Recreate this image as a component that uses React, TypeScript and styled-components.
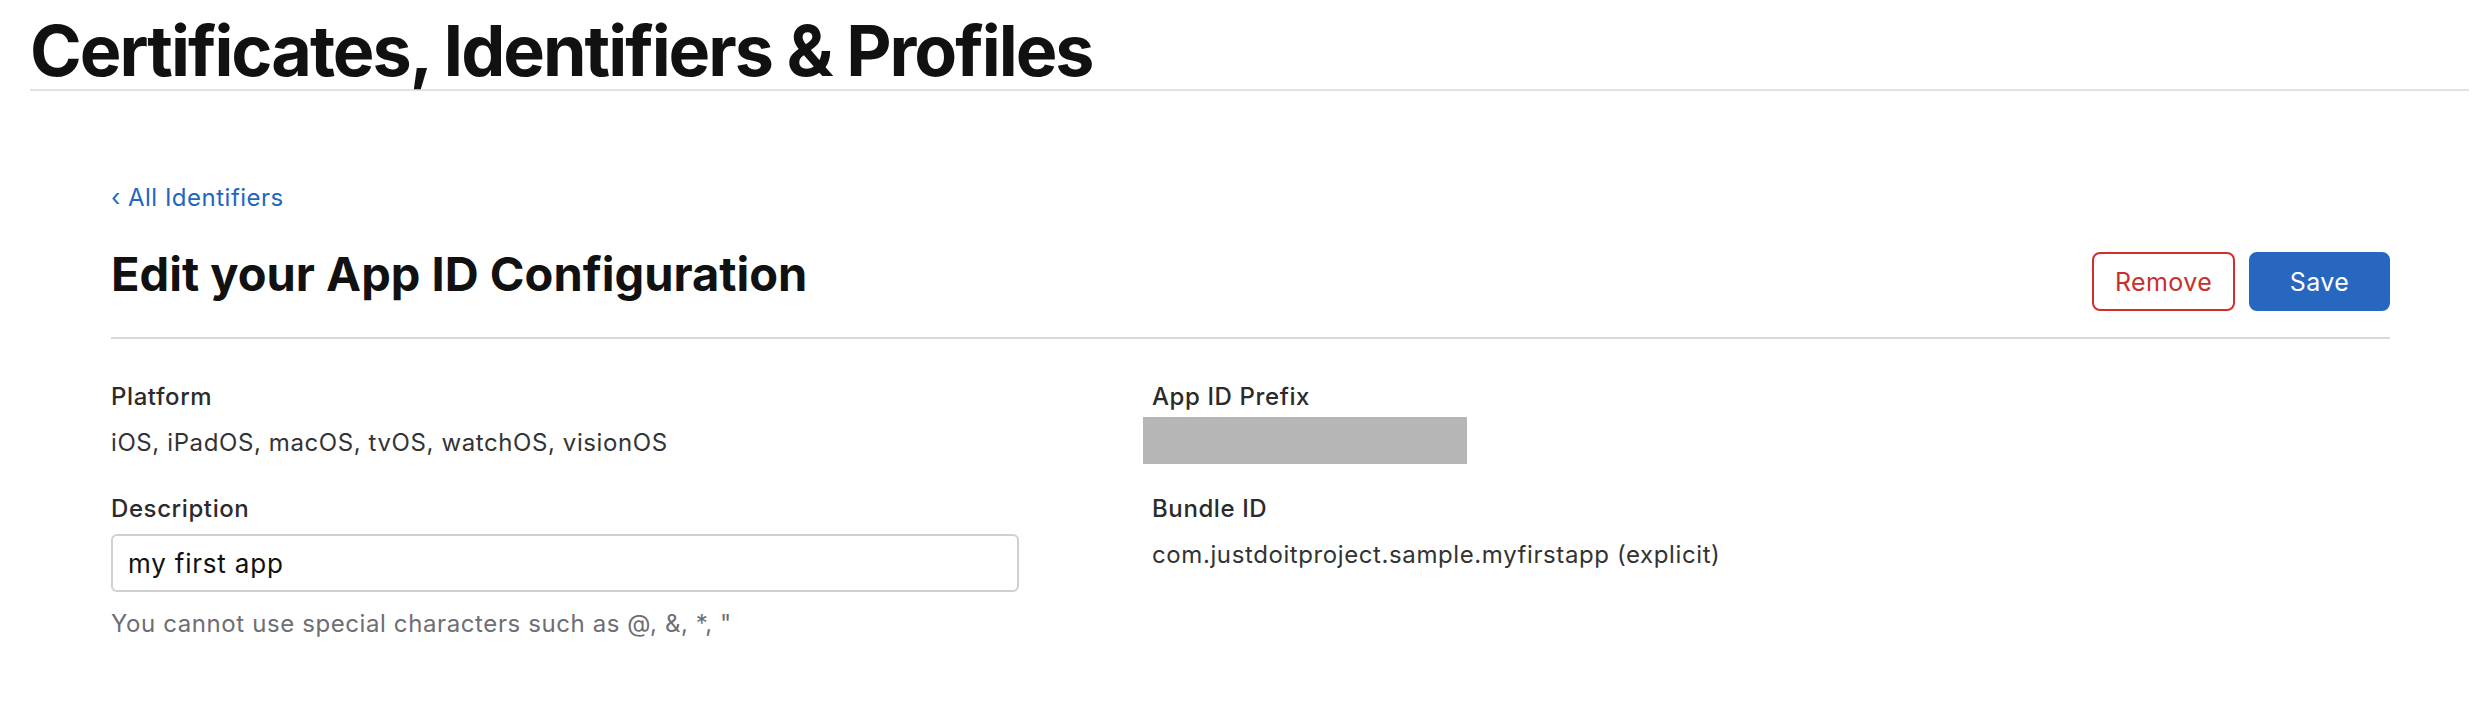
import React from 'react';
import styled, { createGlobalStyle } from 'styled-components';

const GlobalStyle = createGlobalStyle`
  html, body {
    margin: 0;
    padding: 0;
    background: #fff;
  }
  body {
    font-family: Inter, "Noto Sans", "Liberation Sans", sans-serif;
    color: #333;
  }
`;

const Header = styled.header`
  margin: 0 9px 0 30px;
  padding: 16px 0 3px;
  border-bottom: 2px solid #e1e1e1;
`;

const SiteTitle = styled.h1`
  margin: 0;
  font-size: 70px;
  line-height: 70px;
  font-weight: 700;
  letter-spacing: -2px;
  color: #111;
`;

const Main = styled.main`
  padding: 91px 88px 0 111px;
`;

const BackLink = styled.a`
  display: inline-block;
  font-size: 24px;
  line-height: 32px;
  letter-spacing: 0.5px;
  color: #2166c2;
  text-decoration: none;
  cursor: pointer;
`;

const TitleRow = styled.div`
  display: flex;
  justify-content: space-between;
  align-items: flex-start;
  margin-top: 32px;
  padding-bottom: 26px;
  border-bottom: 2px solid #d8d8d8;
`;

const PageTitle = styled.h2`
  margin: 0;
  font-size: 47px;
  line-height: 56px;
  font-weight: 700;
  letter-spacing: 0;
  color: #111;
`;

const Actions = styled.div`
  display: flex;
  gap: 14px;
  margin-top: 6px;
`;

const Button = styled.button<{ $variant: 'danger' | 'primary' }>`
  height: 59px;
  width: ${p => (p.$variant === 'danger' ? '143px' : '141px')};
  border-radius: 8px;
  font-family: inherit;
  font-size: 25px;
  letter-spacing: 0.4px;
  cursor: pointer;
  border: 2px solid ${p => (p.$variant === 'danger' ? '#d1302a' : '#2767c0')};
  background: ${p => (p.$variant === 'danger' ? '#fff' : '#2767c0')};
  color: ${p => (p.$variant === 'danger' ? '#c9302c' : '#fff')};
`;

const Fields = styled.div`
  display: grid;
  grid-template-columns: 1041px 1fr;
  row-gap: 29px;
  padding-top: 42px;
`;

const Field = styled.div`
  display: flex;
  flex-direction: column;
  align-items: flex-start;
`;

const Label = styled.div`
  font-size: 24px;
  line-height: 32px;
  font-weight: 500;
  letter-spacing: 0.6px;
  color: #2b2b2b;
`;

const Value = styled.div`
  margin-top: 14px;
  font-size: 24px;
  line-height: 32px;
  letter-spacing: 0.6px;
  color: #333;
`;

const Redacted = styled.div`
  margin: 4px 0 0 -9px;
  width: 324px;
  height: 47px;
  background: #b6b6b6;
`;

const TextInput = styled.input`
  box-sizing: border-box;
  margin-top: 9px;
  width: 908px;
  height: 58px;
  padding: 0 15px;
  border: 2px solid #d0d0d0;
  border-radius: 6px;
  font-family: inherit;
  font-size: 26px;
  letter-spacing: 0.8px;
  color: #111;
  outline: none;
`;

const Hint = styled.div`
  margin-top: 16px;
  font-size: 24px;
  line-height: 32px;
  letter-spacing: 0.6px;
  color: #6e6e73;
`;

export default function App() {
  return (
    <>
      <GlobalStyle />
      <Header>
        <SiteTitle>Certificates, Identifiers &amp; Profiles</SiteTitle>
      </Header>
      <Main>
        <BackLink>‹ All Identifiers</BackLink>
        <TitleRow>
          <PageTitle>Edit your App ID Configuration</PageTitle>
          <Actions>
            <Button $variant="danger">Remove</Button>
            <Button $variant="primary">Save</Button>
          </Actions>
        </TitleRow>
        <Fields>
          <Field>
            <Label>Platform</Label>
            <Value>iOS, iPadOS, macOS, tvOS, watchOS, visionOS</Value>
          </Field>
          <Field>
            <Label>App ID Prefix</Label>
            <Redacted />
          </Field>
          <Field>
            <Label>Description</Label>
            <TextInput defaultValue="my first app" />
            <Hint>You cannot use special characters such as @, &amp;, *, "</Hint>
          </Field>
          <Field>
            <Label>Bundle ID</Label>
            <Value>com.justdoitproject.sample.myfirstapp (explicit)</Value>
          </Field>
        </Fields>
      </Main>
    </>
  );
}
